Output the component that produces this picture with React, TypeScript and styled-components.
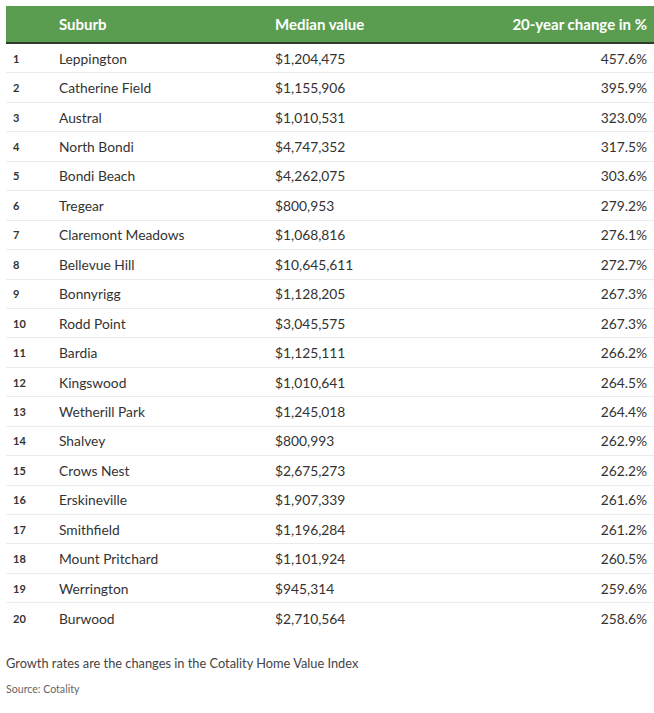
import React from "react";
import styled, { createGlobalStyle } from "styled-components";

const Global = createGlobalStyle`
  html, body { margin: 0; padding: 0; background: #ffffff; }
  body { font-family: Lato, "Noto Sans", sans-serif; color: #333333; }
`;

const rows: [string, string, string][] = [
  ["Leppington", "$1,204,475", "457.6%"],
  ["Catherine Field", "$1,155,906", "395.9%"],
  ["Austral", "$1,010,531", "323.0%"],
  ["North Bondi", "$4,747,352", "317.5%"],
  ["Bondi Beach", "$4,262,075", "303.6%"],
  ["Tregear", "$800,953", "279.2%"],
  ["Claremont Meadows", "$1,068,816", "276.1%"],
  ["Bellevue Hill", "$10,645,611", "272.7%"],
  ["Bonnyrigg", "$1,128,205", "267.3%"],
  ["Rodd Point", "$3,045,575", "267.3%"],
  ["Bardia", "$1,125,111", "266.2%"],
  ["Kingswood", "$1,010,641", "264.5%"],
  ["Wetherill Park", "$1,245,018", "264.4%"],
  ["Shalvey", "$800,993", "262.9%"],
  ["Crows Nest", "$2,675,273", "262.2%"],
  ["Erskineville", "$1,907,339", "261.6%"],
  ["Smithfield", "$1,196,284", "261.2%"],
  ["Mount Pritchard", "$1,101,924", "260.5%"],
  ["Werrington", "$945,314", "259.6%"],
  ["Burwood", "$2,710,564", "258.6%"],
];

const Page = styled.div`
  padding: 6px 0 0 6px;
`;

const Table = styled.div`
  display: grid;
  grid-template-columns: 53px 216px 1fr 200px;
`;

const HeadRow = styled.div`
  display: contents;
`;

const HeadCell = styled.div<{ $right?: boolean }>`
  background: #5b9d50;
  color: #ffffff;
  font-weight: 700;
  font-size: 15px;
  height: 36px;
  display: flex;
  align-items: center;
  justify-content: ${(p) => (p.$right ? "flex-end" : "flex-start")};
  padding: 0 7px 0 0;
  border-bottom: 2px solid #2f3a2c;
`;

const Row = styled.div`
  display: contents;
`;

const Cell = styled.div<{ $right?: boolean; $last?: boolean }>`
  height: 29.45px;
  box-sizing: border-box;
  display: flex;
  align-items: center;
  justify-content: ${(p) => (p.$right ? "flex-end" : "flex-start")};
  padding: 0 7px 0 0;
  font-size: 13.8px;
  color: #333333;
  border-bottom: ${(p) => (p.$last ? "none" : "1px solid #ebebeb")};
`;

const Rank = styled(Cell)`
  font-size: 11px;
  font-weight: 700;
  padding-left: 7px;
`;

const Caption = styled.p`
  margin: 22px 0 0 0;
  font-size: 12.8px;
  color: #444444;
`;

const Source = styled.p`
  margin: 12px 0 0 0;
  font-size: 10.6px;
  color: #666666;
`;

export default function App() {
  return (
    <>
      <Global />
      <Page>
        <Table>
          <HeadRow>
            <HeadCell />
            <HeadCell>Suburb</HeadCell>
            <HeadCell>Median value</HeadCell>
            <HeadCell $right>20-year change in %</HeadCell>
          </HeadRow>
          {rows.map((r, i) => {
            const last = i === rows.length - 1;
            return (
              <Row key={i}>
                <Rank $last={last}>{i + 1}</Rank>
                <Cell $last={last}>{r[0]}</Cell>
                <Cell $last={last}>{r[1]}</Cell>
                <Cell $last={last} $right>{r[2]}</Cell>
              </Row>
            );
          })}
        </Table>
        <Caption>Growth rates are the changes in the Cotality Home Value Index</Caption>
        <Source>Source: Cotality</Source>
      </Page>
    </>
  );
}
